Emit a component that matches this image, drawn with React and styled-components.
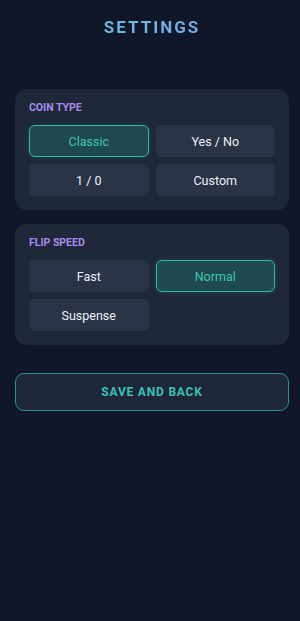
import React, { useState } from 'react'
import styled, { createGlobalStyle } from 'styled-components'

const Global = createGlobalStyle`
    html, body {
        margin: 0;
        padding: 0;
        background: #0f1729;
    }
    body {
        font-family: Roboto, "Noto Sans", sans-serif;
        min-height: 621px;
    }
`

const Page = styled.div`
    display: flex;
    flex-direction: column;
    padding: 17px 11px 0 15px;
`

const Title = styled.h1`
    margin: 0 0 52px 0;
    text-align: center;
    font-size: 17px;
    font-weight: 700;
    letter-spacing: 2px;
    line-height: 20px;
    background: linear-gradient(90deg, #68c4de, #7ca0e4);
    -webkit-background-clip: text;
    background-clip: text;
    color: transparent;
`

const Card = styled.section`
    background: #1f2839;
    border-radius: 12px;
    padding: 13px 14px 14px 14px;
    margin-bottom: 14px;
`

const Label = styled.h2`
    margin: 0 0 11px 0;
    font-size: 10.5px;
    line-height: 12px;
    font-weight: 700;
    color: #a78bf0;
    text-transform: uppercase;
`

const Grid = styled.div`
    display: grid;
    grid-template-columns: 1fr 1fr;
    gap: 7px;
`

const Option = styled.button`
    height: 32px;
    border-radius: 6px;
    font-family: inherit;
    font-size: 12.5px;
    font-weight: 400;
    cursor: pointer;
    border: 1px solid ${p => (p.$active ? '#34b8a6' : 'transparent')};
    background: ${p => (p.$active ? '#1f4a4d' : '#2a3446')};
    color: ${p => (p.$active ? '#3fc6b2' : '#eef1f6')};
    box-shadow: ${p => (p.$active ? '0 0 5px rgba(45, 212, 191, 0.2)' : 'none')};
`

const SaveButton = styled.button`
    margin-top: 14px;
    height: 38px;
    border-radius: 9px;
    border: 1px solid #2a8f92;
    background: #1e2738;
    color: #38c2b5;
    font-family: inherit;
    font-size: 12px;
    font-weight: 700;
    letter-spacing: 0.8px;
    text-transform: uppercase;
    cursor: pointer;
`

const coinTypes = ['Classic', 'Yes / No', '1 / 0', 'Custom']
const speeds = ['Fast', 'Normal', 'Suspense']

const Section = ({ label, options, value, onChange }) => (
    <Card>
        <Label>{label}</Label>
        <Grid>
            {options.map(o => (
                <Option key={o} $active={o === value} onClick={() => onChange(o)}>
                    {o}
                </Option>
            ))}
        </Grid>
    </Card>
)

const App = () => {
    const [coin, setCoin] = useState('Classic')
    const [speed, setSpeed] = useState('Normal')
    return (
        <Page>
            <Global />
            <Title>SETTINGS</Title>
            <Section label="Coin Type" options={coinTypes} value={coin} onChange={setCoin} />
            <Section label="Flip Speed" options={speeds} value={speed} onChange={setSpeed} />
            <SaveButton>Save and Back</SaveButton>
        </Page>
    )
}

export default App
